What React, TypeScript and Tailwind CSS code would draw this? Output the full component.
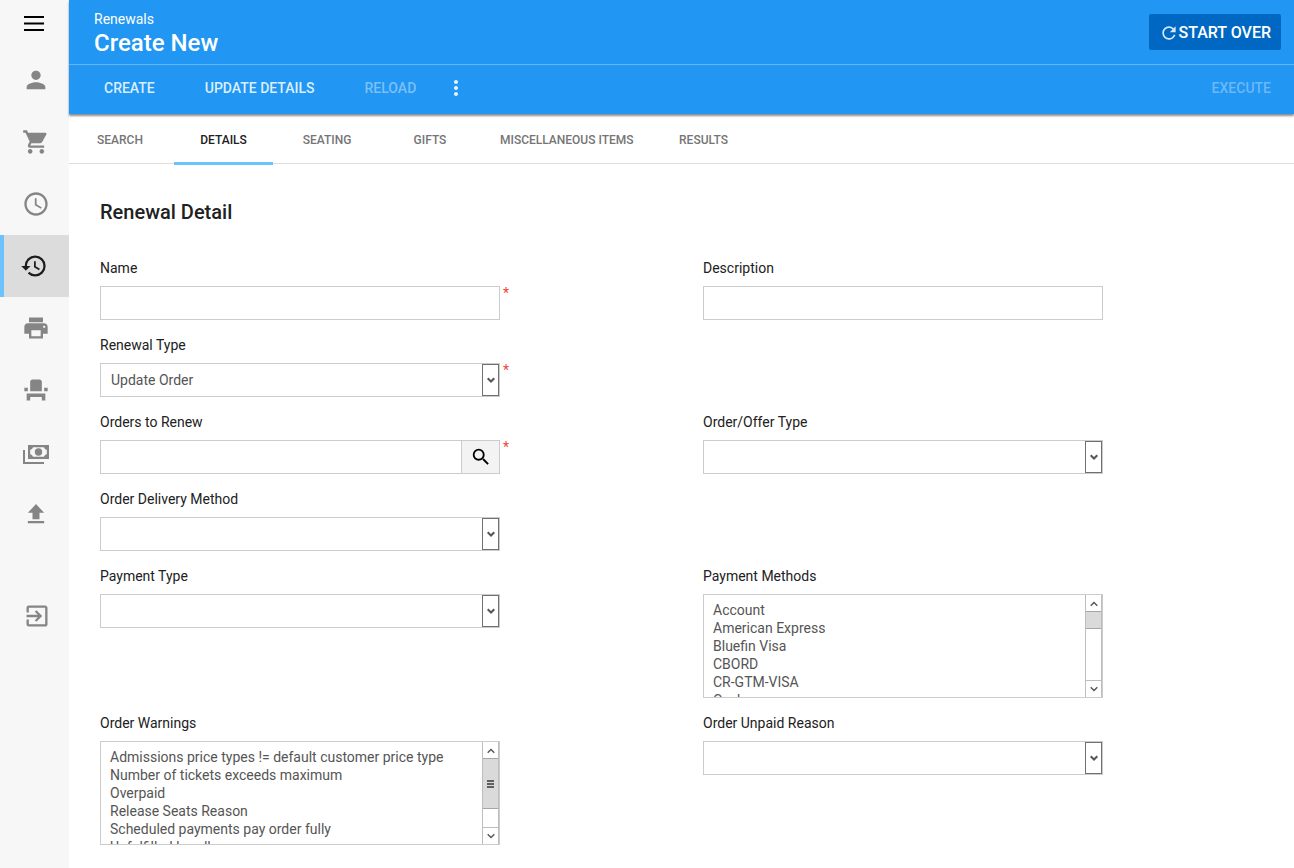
import { useState, type ReactNode } from "react";
import {
  MdAccessTime,
  MdEventSeat,
  MdExitToApp,
  MdHistory,
  MdMoreVert,
  MdPerson,
  MdPrint,
  MdRefresh,
  MdSearch,
  MdShoppingCart,
} from "react-icons/md";

const tabs = ["Search", "Details", "Seating", "Gifts", "Miscellaneous Items", "Results"];

const paymentMethods = [
  "Account",
  "American Express",
  "Bluefin Visa",
  "CBORD",
  "CR-GTM-VISA",
  "Cash",
];

const orderWarnings = [
  "Admissions price types != default customer price type",
  "Number of tickets exceeds maximum",
  "Overpaid",
  "Release Seats Reason",
  "Scheduled payments pay order fully",
  "Unfulfilled bundle",
];

function MenuIcon() {
  return (
    <svg width="20" height="15" viewBox="0 0 20 15" fill="currentColor">
      <path d="M0 0h20v2H0zM0 6.5h20v2H0zM0 13h20v2H0z" />
    </svg>
  );
}

function PaymentsIcon() {
  return (
    <svg width="26" height="19" viewBox="0 0 26 19" fill="currentColor">
      <path
        fillRule="evenodd"
        d="M5 0h21v14H5zM10 2.2C9.6 3.6 8.6 4.5 7.2 4.8v4.4c1.4.3 2.4 1.200 2.800 2.600h11c.4-1.400 1.400-2.300 2.800-2.600V4.800C22.400 4.500 21.400 3.600 21 2.200z"
      />
      <circle cx="15.500" cy="7" r="3.700" />
      <path d="M0 5h2v12h19v2H0z" />
    </svg>
  );
}

function UploadIcon() {
  return (
    <svg width="28" height="28" viewBox="0 0 24 24" fill="currentColor">
      <path d="M5 20h14v-2H5zM5 11h4v5.5h6V11h4l-7-7.5z" />
    </svg>
  );
}

const navItems = [
  { name: "Customers", icon: <MdPerson size={28} /> },
  { name: "Orders", icon: <MdShoppingCart size={28} /> },
  { name: "Recent", icon: <MdAccessTime size={28} /> },
  { name: "Renewals", icon: <MdHistory size={28} /> },
  { name: "Print", icon: <MdPrint size={28} /> },
  { name: "Seats", icon: <MdEventSeat size={28} /> },
  { name: "Payments", icon: <PaymentsIcon /> },
  { name: "Upload", icon: <UploadIcon /> },
];

function Chevron({ up = false, bold = false }: { up?: boolean; bold?: boolean }) {
  return (
    <svg width="8" height="6" viewBox="0 0 8 6" fill="none" stroke="#555" strokeWidth={bold ? 2 : 1.4}>
      <path d={up ? "M.7 4.8 4 1.5l3.3 3.3" : "M.7 1.2 4 4.5l3.3-3.3"} />
    </svg>
  );
}

type FieldProps = {
  id: string;
  label: string;
  required?: boolean;
  className?: string;
  children: ReactNode;
};

function Field({ id, label, required, className = "md:col-start-1", children }: FieldProps) {
  return (
    <div className={className}>
      <label htmlFor={id} className="mb-2 block text-sm text-[#212121]">
        {label}
      </label>
      <div className="flex items-start gap-[3px]">
        <div className="w-full max-w-[400px]">{children}</div>
        {required && <span className="text-sm leading-3.5 text-[#f44336]">*</span>}
      </div>
    </div>
  );
}

function TextBox({ id }: { id: string }) {
  return (
    <input
      id={id}
      type="text"
      className="block h-[34px] w-full border border-[#ccc] px-2.5 text-sm text-[#555] outline-none"
    />
  );
}

function DropDown({ id, options = [""] }: { id: string; options?: string[] }) {
  return (
    <div className="relative h-[34px] border border-[#ccc]">
      <select
        id={id}
        className="block h-full w-full appearance-none bg-white pr-6 pl-2.5 text-sm text-[#555] outline-none"
      >
        {options.map((o) => (
          <option key={o}>{o}</option>
        ))}
      </select>
      <span className="pointer-events-none absolute inset-y-0 right-0 flex w-[17px] items-center justify-center border border-[#707070] bg-white">
        <Chevron bold />
      </span>
    </div>
  );
}

function ListBox({ id, options, thumb }: { id: string; options: string[]; thumb: ReactNode }) {
  return (
    <div className="flex h-[104px] border border-[#ccc]">
      <select
        id={id}
        multiple
        className="block h-full min-w-0 flex-1 overflow-y-auto bg-white pt-[7px] pl-[7px] text-sm leading-[18px] text-[#555] outline-none [scrollbar-width:none]"
      >
        {options.map((o) => (
          <option key={o} className="h-[18px] min-h-0 px-0.5 py-0">
            {o}
          </option>
        ))}
      </select>
      <div className="flex w-[17px] flex-col border-x border-[#bdbdbd]">
        <span className="flex h-4 items-center justify-center pt-0.5">
          <Chevron up />
        </span>
        {thumb}
        <span className="mt-auto flex h-[17px] items-center justify-center border-t border-[#bdbdbd]">
          <Chevron />
        </span>
      </div>
    </div>
  );
}

export default function App() {
  const [activeTab, setActiveTab] = useState("Details");

  return (
    <div className="flex min-h-screen bg-white font-[Roboto,sans-serif]">
      <nav className="flex w-[69px] shrink-0 flex-col bg-[#f7f7f7] text-[#858585]">
        <button aria-label="Menu" className="flex h-[49px] items-center justify-center pr-0.5 pb-0.5 text-black">
          <MenuIcon />
        </button>
        {navItems.map((item) => (
          <a
            key={item.name}
            href="#"
            aria-label={item.name}
            className={
              item.name === "Renewals"
                ? "flex h-[62px] items-center justify-center border-l-4 border-[#6ec1ff] bg-[#dcdcdc] pr-1.5 text-[#1c1c1c]"
                : item.name === "Payments"
                  ? "flex h-[62px] items-center justify-center pt-1 pl-0.5"
                  : "flex h-[62px] items-center justify-center pl-0.5"
            }
          >
            {item.icon}
          </a>
        ))}
        <a href="#" aria-label="Sign out" className="mt-10 flex h-[62px] items-center justify-center pl-1">
          <MdExitToApp size={28} />
        </a>
      </nav>

      <div className="min-w-0 flex-1">
        <header className="bg-[#2196f3] text-white shadow-[0_2px_2px_rgba(0,0,0,0.45)]">
          <div className="flex h-[65px] items-center justify-between border-b border-[#64b5f6] pr-[13px] pl-[25px]">
            <div className="pt-0.5">
              <p className="text-sm">Renewals</p>
              <h1 className="text-2xl leading-7 font-medium">Create New</h1>
            </div>
            <button className="flex h-9 items-center rounded-xs bg-[#0068c2] pt-0.5 pr-2.5 pl-2.5 font-medium">
              <MdRefresh size={20} className="text-[#d5e8f8]" />
              START OVER
            </button>
          </div>
          <div className="flex h-[49px] items-stretch pr-[23px] pb-[3px] pl-2.5 text-sm font-medium">
            <button className="px-[25px] text-[#dceefd]">CREATE</button>
            <button className="px-[25px] text-[#dceefd]">UPDATE DETAILS</button>
            <button disabled className="px-[25px] text-[#7cc0f8]">
              RELOAD
            </button>
            <button aria-label="More actions" className="flex w-[30px] items-center justify-center text-[#e8f4fe]">
              <MdMoreVert size={24} />
            </button>
            <button disabled className="ml-auto text-[#6cb9f7]">
              EXECUTE
            </button>
          </div>
        </header>

        <div role="tablist" className="flex h-[50px] gap-[5px] border-b border-[#ddd] pl-0.5 text-xs font-medium">
          {tabs.map((t) => (
            <button
              key={t}
              role="tab"
              aria-selected={t === activeTab}
              onClick={() => setActiveTab(t)}
              className={
                t === activeTab
                  ? "-mb-0.5 min-w-[99px] border-b-3 border-[#6ec1ff] px-4 pt-[3px] uppercase text-[#212121]"
                  : "min-w-[98px] px-4 pt-0.5 uppercase text-[#757575]"
              }
            >
              {t}
            </button>
          ))}
        </div>

        <main className="pt-[34px] pb-4 pl-[31px]">
          <h2 className="mb-8 text-xl font-medium text-[#212121]">Renewal Detail</h2>
          <form className="grid grid-cols-1 gap-x-3 gap-y-[15px] md:grid-cols-2">
            <Field id="name" label="Name" required>
              <TextBox id="name" />
            </Field>
            <Field id="description" label="Description" className="md:col-start-2">
              <TextBox id="description" />
            </Field>
            <Field id="renewal-type" label="Renewal Type" required>
              <DropDown id="renewal-type" options={["Update Order", "New Order"]} />
            </Field>
            <Field id="orders" label="Orders to Renew" required>
              <div className="flex h-[34px] border border-[#ccc]">
                <input
                  id="orders"
                  type="text"
                  className="min-w-0 flex-1 px-2.5 text-sm text-[#555] outline-none"
                />
                <button
                  type="button"
                  aria-label="Search orders"
                  className="flex w-[38px] items-center justify-center border-l border-[#ccc] bg-[#f3f3f3] text-black"
                >
                  <MdSearch size={22} />
                </button>
              </div>
            </Field>
            <Field id="order-type" label="Order/Offer Type" className="md:col-start-2">
              <DropDown id="order-type" />
            </Field>
            <Field id="delivery" label="Order Delivery Method">
              <DropDown id="delivery" />
            </Field>
            <Field id="payment-type" label="Payment Type">
              <DropDown id="payment-type" />
            </Field>
            <Field id="payment-methods" label="Payment Methods" className="md:col-start-2">
              <ListBox
                id="payment-methods"
                options={paymentMethods}
                thumb={<span className="h-[18px] border-y border-[#a6a6a6] bg-[#dadada]" />}
              />
            </Field>
            <Field id="warnings" label="Order Warnings">
              <ListBox
                id="warnings"
                options={orderWarnings}
                thumb={
                  <span className="flex h-[51px] flex-col items-center justify-center gap-px border-y border-[#a6a6a6] bg-[#dadada]">
                    <span className="h-0.5 w-[7px] bg-[#606060]" />
                    <span className="h-0.5 w-[7px] bg-[#606060]" />
                    <span className="h-0.5 w-[7px] bg-[#606060]" />
                  </span>
                }
              />
            </Field>
            <Field id="unpaid" label="Order Unpaid Reason" className="md:col-start-2">
              <DropDown id="unpaid" />
            </Field>
          </form>
        </main>
      </div>
    </div>
  );
}
